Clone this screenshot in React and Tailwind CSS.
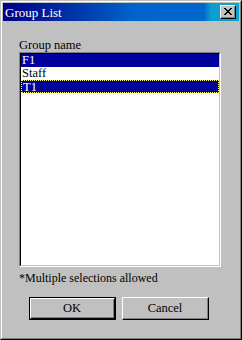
const groups = [
  { name: "F1", selected: true },
  { name: "Staff", selected: false },
  { name: "T1", selected: true, focused: true },
];

const Button = ({ label, isDefault }) => (
  <div className={`h-[23px] w-[87px] ${isDefault ? "border border-black" : ""}`}>
    <div className="h-full w-full border-t border-l border-white border-r border-b border-r-black border-b-black">
      <div className="flex h-full w-full items-center justify-center border-r border-b border-[#808080] text-[12.5px] text-black">
        {label}
      </div>
    </div>
  </div>
);

export default function App() {
  return (
    <div
      className="h-[340px] w-[242px] border border-t-[#c0c0c0] border-l-[#c0c0c0] border-r-black border-b-black bg-[#c0c0c0]"
      style={{ fontFamily: '"Liberation Serif", "Times New Roman", serif' }}
    >
      <div className="flex h-full flex-col border border-t-white border-l-white border-r-[#808080] border-b-[#808080] p-px">
        <div className="flex h-[18px] items-center justify-between bg-[linear-gradient(to_right,#000088_0%,#00229a_20%,#0050bc_45%,#0064cc_55%,#0066cc_85%,#0c9ccf_88%,#10a2d2_100%)] pl-[2px] pr-[3px]">
          <span className="text-[13px] leading-none text-white">Group List</span>
          <div className="h-[14px] w-[16px] border-t border-l border-white border-r border-b border-r-black border-b-black bg-[#c0c0c0]">
            <div className="flex h-full w-full items-center justify-center border-r border-b border-[#808080]">
              <svg width="8" height="7" viewBox="0 0 8 7" shapeRendering="crispEdges">
                <path
                  d="M0 0h2v1h1v1h2v-1h1v-1h2v1h-1v1h-1v1h-1v1h1v1h1v1h1v1h-2v-1h-1v-1h-2v1h-1v1h-2v-1h1v-1h1v-1h1v-1h-1v-1h-1v-1h-1z"
                  fill="#000"
                />
              </svg>
            </div>
          </div>
        </div>

        <div className="flex flex-1 flex-col pl-[16px] pr-[17px] pt-[17px]">
          <div className="h-[14px] text-[12.5px] leading-[14px] text-black">Group name</div>
          <div className="h-[215px] w-[202px] border border-t-[#808080] border-l-[#808080] border-r-white border-b-white">
            <div className="h-full w-full border border-t-black border-l-black border-r-[#c0c0c0] border-b-[#c0c0c0] bg-white">
              {groups.map((group) => (
                <div
                  key={group.name}
                  className={`h-[13px] pl-px text-[12.5px] leading-[12px] ${
                    group.selected ? "bg-[#00009c] text-white" : "text-black"
                  } ${group.focused ? "border border-dotted border-[#ffff70]" : ""}`}
                >
                  {group.name}
                </div>
              ))}
            </div>
          </div>
          <div className="mt-[4px] h-[14px] text-[12px] leading-[14px] text-black">*Multiple selections allowed</div>
          <div className="mt-[12px] flex gap-[6px] pl-[10px]">
            <Button label="OK" isDefault />
            <Button label="Cancel" />
          </div>
        </div>
      </div>
    </div>
  );
}
